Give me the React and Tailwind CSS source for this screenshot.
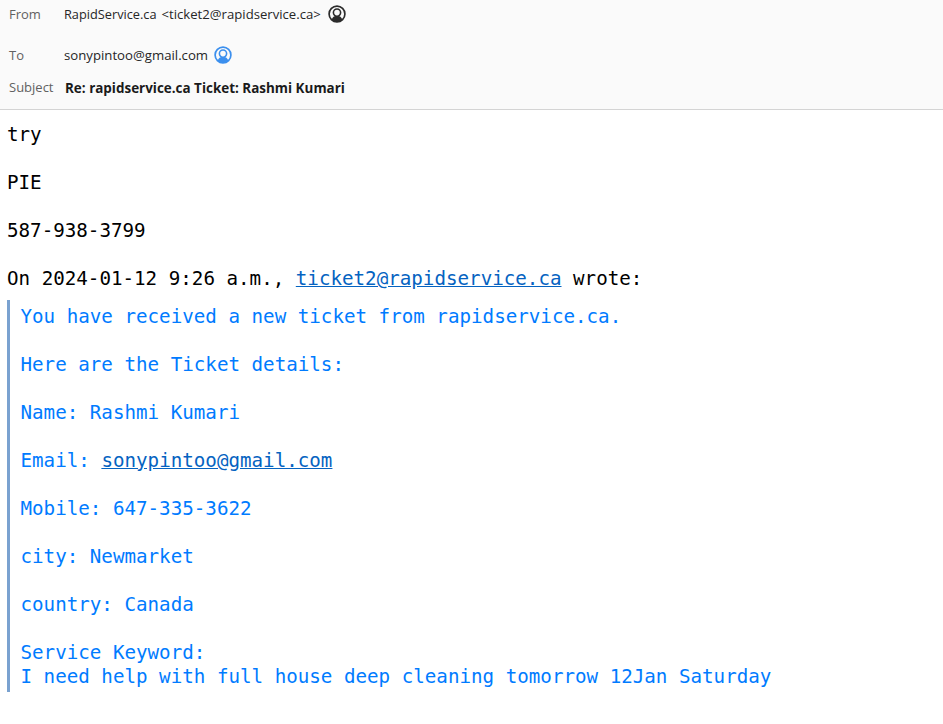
import React from "react";

const MONO = "font-['DejaVu_Sans_Mono',monospace]";

function ContactIcon({ color }) {
  return (
    <svg width="18" height="18" viewBox="0 0 18 18" fill="none" className="shrink-0">
      <circle cx="9" cy="9" r="7.9" stroke={color} strokeWidth="1.7" />
      <circle cx="9" cy="7.6" r="3.6" stroke={color} strokeWidth="1.6" />
      <path d="M3.6 14.4c1-2.4 2.8-3.2 3.9-3.4h3c1.1.2 2.9 1 3.9 3.4C13 16 11 16.9 9 16.9S5 16 3.6 14.4z" fill={color} />
    </svg>
  );
}

function Mail({ children }) {
  return <a className="text-[#0563c1] underline">{children}</a>;
}

function HeaderRow({ label, className, children }) {
  return (
    <div className={`flex items-center ${className}`}>
      <span className="w-[55px] shrink-0 pt-[2px] text-[#616161]">{label}</span>
      {children}
    </div>
  );
}

export default function App() {
  return (
    <div className="h-[724px] w-[943px] overflow-hidden bg-white">
      <header className="flex h-[110px] flex-col border-b border-[#d4d4d4] bg-[#fafafa] pl-[9px] font-['Open_Sans',sans-serif] text-[13px] text-[#262626]">
        <HeaderRow label="From" className="mt-[5px] h-[18px]">
          <span className="pt-[2px] text-[12.75px]">RapidService.ca</span>
          <span className="ml-[5px] pt-[2px] text-[13.15px]">&lt;ticket2@rapidservice.ca&gt;</span>
          <span className="ml-[7px]"><ContactIcon color="#2b2b2b" /></span>
        </HeaderRow>
        <HeaderRow label="To" className="mt-[23px] h-[18px]">
          <span className="pt-[2px] text-[13.2px]">sonypintoo@gmail.com</span>
          <span className="ml-[6px]"><ContactIcon color="#3b8fee" /></span>
        </HeaderRow>
        <HeaderRow label="Subject" className="mt-[14px] h-[18px]">
          <span className="ml-px pt-[2px] text-[13.45px] font-bold text-[#1a1a1a]">Re: rapidservice.ca Ticket: Rashmi Kumari</span>
        </HeaderRow>
      </header>

      <main className={`${MONO} whitespace-pre pl-[7px] pt-[13px] text-[19.2px] leading-[24px] text-black`}>
        <div>try</div>
        <div className="mt-[24px]">PIE</div>
        <div className="mt-[24px]">587-938-3799</div>
        <div className="mt-[24px]">
          On 2024-01-12 9:26 a.m., <Mail>ticket2@rapidservice.ca</Mail> wrote:
        </div>
        <blockquote className="mt-[9px] h-[392px] border-l-[3px] border-[#7aa2d0] pl-[10.5px] pt-[5px] text-[#007bff]">
          <div>You have received a new ticket from rapidservice.ca.</div>
          <div className="mt-[24px]">Here are the Ticket details:</div>
          <div className="mt-[24px]">Name: Rashmi Kumari</div>
          <div className="mt-[24px]">Email: <Mail>sonypintoo@gmail.com</Mail></div>
          <div className="mt-[24px]">Mobile: 647-335-3622</div>
          <div className="mt-[24px]">city: Newmarket</div>
          <div className="mt-[24px]">country: Canada</div>
          <div className="mt-[24px]">Service Keyword:</div>
          <div>I need help with full house deep cleaning tomorrow 12Jan Saturday</div>
        </blockquote>
      </main>
    </div>
  );
}
